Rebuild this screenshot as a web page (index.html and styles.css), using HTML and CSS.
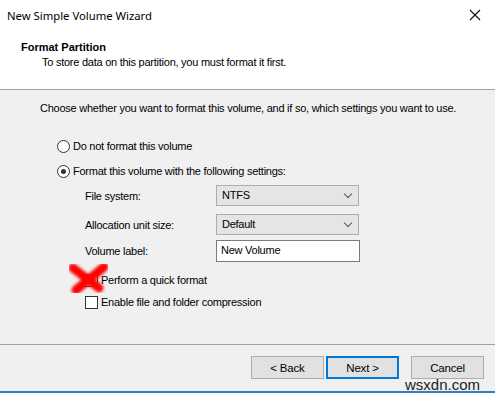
FILE: index.html
```html
<!DOCTYPE html>
<html lang="en">
<head>
    <meta charset="UTF-8">
    <meta name="viewport" content="width=device-width, initial-scale=1.0">
    <title>New Simple Volume Wizard</title>
    <link rel="stylesheet" href="styles.css">
</head>
<body>
    <div class="wizard">
        <div class="top">
            <div class="titlebar">
                <span class="title">New Simple Volume Wizard</span>
                <svg class="close" width="12" height="12" viewBox="0 0 12 12">
                    <path d="M1 1 L11 11 M11 1 L1 11" stroke="#111" stroke-width="1.1" fill="none"/>
                </svg>
            </div>
            <div class="header">
                <div class="page-title">Format Partition</div>
                <div class="page-sub">To store data on this partition, you must format it first.</div>
            </div>
        </div>

        <div class="content">
            <div class="intro">Choose whether you want to format this volume, and if so, which settings you want to use.</div>

            <label class="radio first"><span class="dot"></span>Do not format this volume</label>
            <label class="radio second"><span class="dot checked"></span>Format this volume with the following settings:</label>

            <div class="settings">
                <div class="row fs">
                    <span class="label">File system:</span>
                    <div class="select">NTFS <span class="chev"></span></div>
                </div>
                <div class="row alloc">
                    <span class="label">Allocation unit size:</span>
                    <div class="select">Default <span class="chev"></span></div>
                </div>
                <div class="row vol">
                    <span class="label">Volume label:</span>
                    <div class="textbox">New Volume</div>
                </div>
            </div>

            <label class="check quick"><span class="box"></span>Perform a quick format</label>
            <label class="check compress"><span class="box"></span>Enable file and folder compression</label>

            <svg class="redx" width="48" height="40" viewBox="0 0 48 40">
                <defs>
                    <filter id="soft"><feGaussianBlur stdDeviation="1.7"/></filter>
                </defs>
                <g filter="url(#soft)" stroke="#ff0000" stroke-width="9" stroke-linecap="round">
                    <path d="M9 10 L35 30"/>
                    <path d="M40 9 L12 32"/>
                </g>
            </svg>
        </div>

        <div class="footer">
            <button class="btn back">&lt; Back</button>
            <button class="btn next">Next &gt;</button>
            <button class="btn cancel">Cancel</button>
            <span class="watermark">wsxdn.com</span>
        </div>
    </div>
</body>
</html>
```

FILE: styles.css
```css
body {
    margin: 0;
    background-color: #f0f0f0;
    font-family: "Liberation Sans", Arial, sans-serif;
    font-size: 11px;
    letter-spacing: -0.25px;
    color: #000;
    white-space: nowrap;
}
.wizard {
    width: 495px;
    height: 393px;
    display: flex;
    flex-direction: column;
}
.top {
    background-color: #fff;
    height: 89px;
    border-bottom: 1px solid #a0a0a0;
}
.titlebar {
    height: 30px;
    display: flex;
    align-items: center;
    justify-content: space-between;
    padding: 0 10px 0 7px;
}
.title {
    font-family: "Noto Sans", sans-serif;
    font-size: 11.3px;
    letter-spacing: 0;
}
.close {
    margin-right: 4px;
}
.header {
    padding-top: 10px;
}
.page-title {
    font-weight: bold;
    padding-left: 21px;
    line-height: 14px;
    letter-spacing: 0;
}
.page-sub {
    padding-left: 42px;
    line-height: 14px;
    margin-top: 1px;
}
.content {
    position: relative;
    height: 254px;
    padding-left: 40px;
}
.intro {
    padding-top: 11px;
    line-height: 14px;
}
.radio {
    display: flex;
    align-items: center;
    line-height: 14px;
    margin-left: 17px;
}
.radio.first {
    margin-top: 24px;
}
.radio.second {
    margin-top: 11px;
}
.dot {
    width: 11px;
    height: 11px;
    border: 1px solid #333;
    border-radius: 50%;
    background: #fff;
    margin-right: 3px;
    position: relative;
}
.dot.checked::after {
    content: "";
    position: absolute;
    left: 3px;
    top: 3px;
    width: 5px;
    height: 5px;
    border-radius: 50%;
    background: #333;
}
.settings {
    margin-left: 45px;
}
.row {
    display: flex;
    align-items: center;
}
.row.fs {
    margin-top: 7px;
}
.row.alloc {
    margin-top: 8px;
}
.row.vol {
    margin-top: 5px;
}
.label {
    width: 131px;
}
.select {
    box-sizing: border-box;
    width: 143px;
    height: 21px;
    background-color: #e5e5e5;
    border: 1px solid #adadad;
    padding-left: 5px;
    line-height: 19px;
    position: relative;
}
.chev {
    position: absolute;
    right: 7px;
    top: 5px;
    width: 5px;
    height: 5px;
    border-right: 1px solid #555;
    border-bottom: 1px solid #555;
    transform: rotate(45deg);
}
.textbox {
    box-sizing: border-box;
    width: 144px;
    height: 22px;
    background-color: #fff;
    border: 1px solid #7a7a7a;
    padding-left: 4px;
    line-height: 19px;
}
.check {
    display: flex;
    align-items: center;
    line-height: 14px;
    margin-left: 45px;
}
.check.quick {
    margin-top: 11px;
}
.check.compress {
    margin-top: 8px;
}
.box {
    width: 11px;
    height: 11px;
    border: 1px solid #333;
    background: #fff;
    margin-right: 3px;
}
.redx {
    position: absolute;
    left: 64px;
    top: 168px;
}
.footer {
    flex: 1;
    border-top: 1px solid #a0a0a0;
    border-bottom: 2px solid #2f7fc4;
    position: relative;
    display: flex;
    align-items: flex-start;
    padding: 11px 0 0 251px;
}
.btn {
    box-sizing: border-box;
    width: 73px;
    height: 23px;
    background-color: #e1e1e1;
    border: 1px solid #adadad;
    font-family: "Liberation Sans", Arial, sans-serif;
    font-size: 11.5px;
    letter-spacing: -0.2px;
    padding: 0;
    color: #000;
}
.next {
    margin-left: 2px;
    border: 2px solid #0078d7;
}
.cancel {
    margin-left: 12px;
}
.watermark {
    position: absolute;
    left: 405px;
    top: 31px;
    font-family: "Liberation Sans", Arial, sans-serif;
    font-size: 15px;
    letter-spacing: 0;
    color: #222;
}
```
